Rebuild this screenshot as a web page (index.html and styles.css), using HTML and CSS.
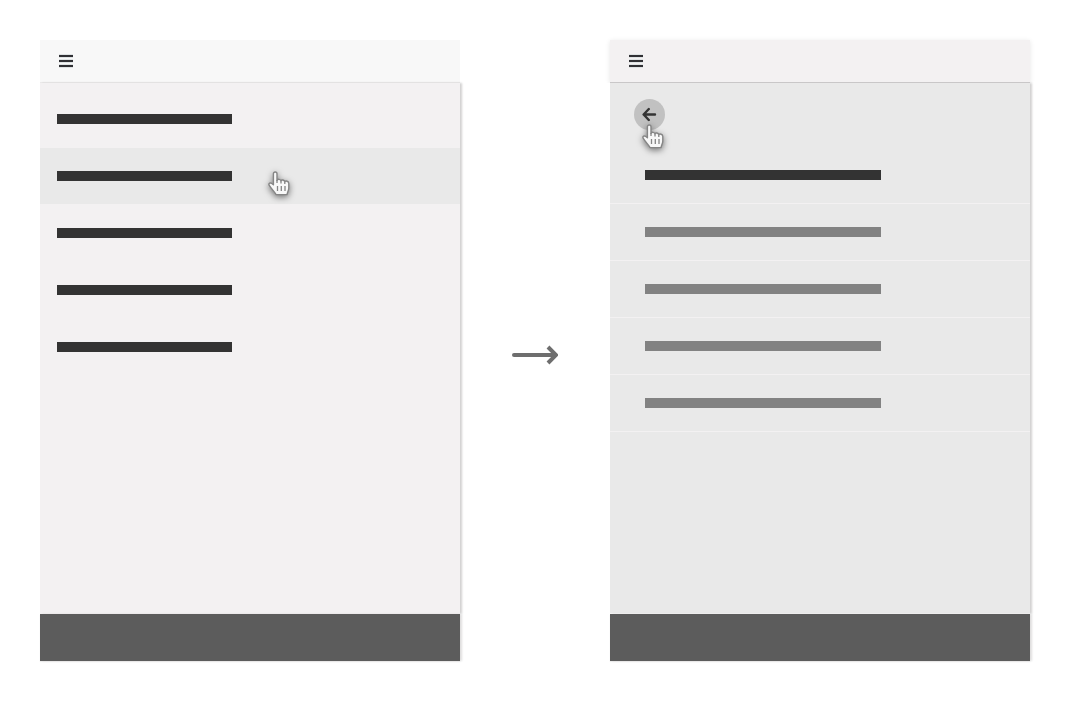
FILE: index.html
```html
<!DOCTYPE html>
<html lang="en">
<head>
<meta charset="utf-8">
<meta name="viewport" content="width=device-width, initial-scale=1">
<title>Navigation drill-down</title>
<link rel="stylesheet" href="styles.css">
</head>
<body>
<svg class="symbols" aria-hidden="true">
  <symbol id="hand" viewBox="0 0 26 27">
    <path d="M7.4 14.8V3.8C7.4 1.4 11 1.4 11 3.8V10.4C11.4 8.8 14.6 9 15 10.9C15.5 9.4 18.4 9.7 18.8 11.7C19.6 10.6 22.8 10.9 22.8 13.6V18C22.8 20.2 21.6 21.8 21 24.6H10C9 22 5.6 19.4 3.1 15.2C2.3 13.4 4.4 12.3 5.8 13.5Z" fill="#f8f8f8" stroke="#858585" stroke-width="1.4" stroke-linejoin="round"/>
    <path d="M11 10V13M15 11V13.5M18.8 12V14M11.5 16V21M15.3 16V21M19 16V21" fill="none" stroke="#858585" stroke-width="1.3"/>
  </symbol>
  <symbol id="bars" viewBox="0 0 14 14">
    <path d="M0 2H14M0 7H14M0 12H14" stroke="#dfe3e4" stroke-width="4"/>
    <path d="M0 2H14M0 7H14M0 12H14" stroke="#303034" stroke-width="2"/>
  </symbol>
</svg>
<main class="flow">
  <section class="screen" aria-label="Main menu">
    <header class="bar">
      <button class="menu" type="button" aria-label="Menu"><svg width="14" height="14"><use href="#bars"/></svg></button>
    </header>
    <nav class="list" aria-label="Sections">
      <a class="row" href="#one" aria-label="Section 1"><span class="line"></span></a>
      <a class="row current" href="#two" aria-label="Section 2"><span class="line"></span><svg class="hand hand-row" aria-hidden="true"><use href="#hand"/></svg></a>
      <a class="row" href="#three" aria-label="Section 3"><span class="line"></span></a>
      <a class="row" href="#four" aria-label="Section 4"><span class="line"></span></a>
      <a class="row" href="#five" aria-label="Section 5"><span class="line"></span></a>
    </nav>
    <footer class="foot"></footer>
  </section>
  <svg class="arrow" width="46" height="20" viewBox="0 0 46 20" aria-hidden="true"><path d="M2 10H43" fill="none" stroke="#6e6e6e" stroke-width="4" stroke-linecap="round"/><path d="M36 2L44 10L36 18" fill="none" stroke="#6e6e6e" stroke-width="4"/></svg>
  <section class="screen detail" aria-label="Submenu">
    <header class="bar">
      <button class="menu" type="button" aria-label="Menu"><svg width="14" height="14"><use href="#bars"/></svg></button>
    </header>
    <nav class="list" aria-label="Subsections">
      <div class="back-row">
        <button class="back" type="button" aria-label="Back"><svg width="15" height="15" viewBox="0 0 15 15"><path d="M6.8 2L1.6 7.5L6.8 13M2 7.5H13" fill="none" stroke="#333" stroke-width="2.4" stroke-linecap="round" stroke-linejoin="round"/></svg></button>
        <svg class="hand hand-back" aria-hidden="true"><use href="#hand"/></svg>
      </div>
      <a class="row title" href="#two" aria-label="Section 2"><span class="line"></span></a>
      <a class="row" href="#a" aria-label="Item 1"><span class="line"></span></a>
      <a class="row" href="#b" aria-label="Item 2"><span class="line"></span></a>
      <a class="row" href="#c" aria-label="Item 3"><span class="line"></span></a>
      <a class="row" href="#d" aria-label="Item 4"><span class="line"></span></a>
    </nav>
    <footer class="foot"></footer>
  </section>
</main>
</body>
</html>
```
FILE: styles.css
```css
* {
  box-sizing: border-box;
}

body {
  margin: 0;
  background: #fff;
  font-family: "Liberation Sans", Arial, sans-serif;
}

.symbols {
  position: absolute;
  width: 0;
  height: 0;
}

.flow {
  display: grid;
  grid-template-columns: 1fr 150px 1fr;
  min-height: 100vh;
  padding: 40px;
}

.screen {
  display: flex;
  flex-direction: column;
}

.bar {
  display: flex;
  align-items: center;
  height: 43px;
  padding: 0 16px;
  background: #f8f8f8;
  border-bottom: 1px solid #ebeaea;
}

.detail .bar {
  z-index: 1;
  background: #f3f1f2;
  border-bottom-color: #c9c7c8;
  box-shadow: 0 1px 5px rgba(0, 0, 0, 0.1);
  clip-path: inset(-6px -6px 0 -6px);
}

.menu {
  display: flex;
  padding: 3px;
  border: 0;
  background: none;
}

.list {
  flex: 1;
  padding-top: 8px;
  background: #f3f1f2;
  box-shadow: 2px 0 2px #d2d1d1;
}

.detail .list {
  padding-top: 16px;
  background: #e9e9e9;
  border-bottom: 1px solid #f5f5f5;
}

.row {
  position: relative;
  display: flex;
  align-items: center;
  height: 57px;
  padding-left: 17px;
  border-bottom: 1px solid #f3f1f2;
}

.current {
  background: #e9e9e9;
}

.detail .row {
  padding-left: 35px;
}

.line {
  width: 175px;
  height: 10px;
  background: #333;
}

.detail .line {
  width: 236px;
  background: #828282;
}

.detail .title .line {
  background: #333;
}

.back-row {
  position: relative;
  padding: 0 24px 17px;
}

.back {
  display: flex;
  align-items: center;
  justify-content: center;
  width: 31px;
  height: 31px;
  padding: 0;
  border: 0;
  border-radius: 50%;
  background: #c1c1c1;
}

.hand {
  position: absolute;
  width: 26px;
  height: 27px;
  overflow: visible;
  filter: drop-shadow(0 2px 3px rgba(0, 0, 0, 0.5));
}

.hand-row {
  top: 22px;
  left: 226px;
}

.hand-back {
  top: 24px;
  left: 30px;
}

.foot {
  height: 47px;
  background: #5c5c5c;
  box-shadow: 2px 0 2px #dfdede, 0 1px 1px #eee;
}

.arrow {
  align-self: center;
  justify-self: center;
  margin-top: 8px;
}
```
